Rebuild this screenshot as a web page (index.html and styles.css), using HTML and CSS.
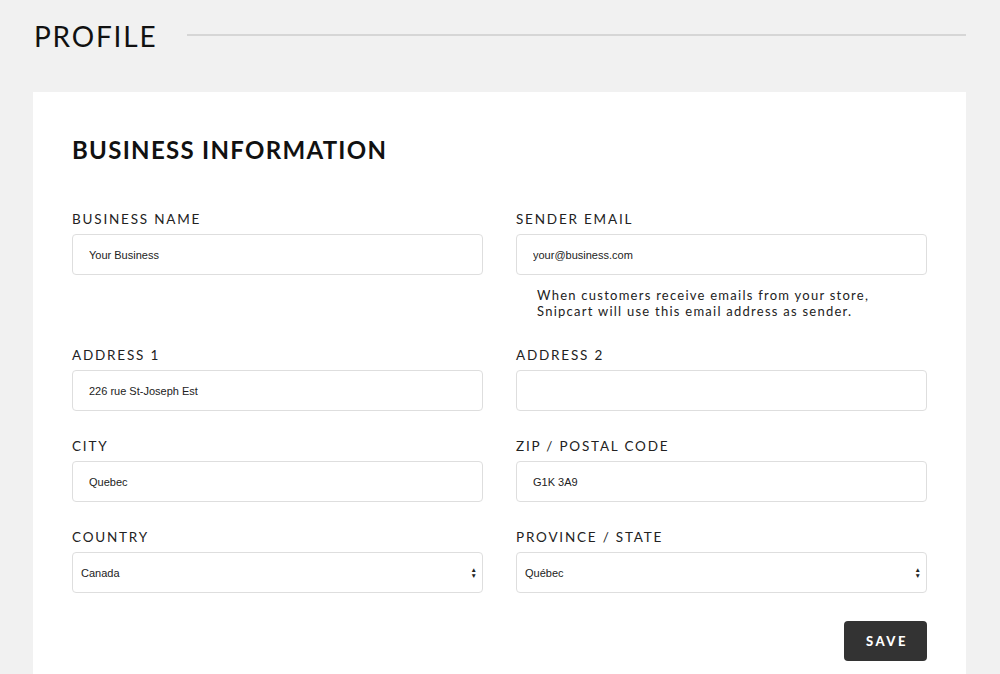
FILE: index.html
```html
<!DOCTYPE html>
<html lang="en">
<head>
    <meta charset="UTF-8">
    <meta name="viewport" content="width=device-width, initial-scale=1.0">
    <title>Profile</title>
    <link rel="stylesheet" href="styles.css">
</head>
<body>
    <div class="page">
        <div class="page-header">
            <h1>Profile</h1>
            <div class="rule"></div>
        </div>
        <div class="card">
            <h2>Business Information</h2>
            <form action="" class="fields">
                <div class="field">
                    <label>Business name</label>
                    <input type="text" value="Your Business">
                </div>
                <div class="field">
                    <label>Sender email</label>
                    <input type="text" value="your@business.com">
                    <p class="help">When customers receive emails from your store,<br>Snipcart will use this email address as sender.</p>
                </div>
                <div class="field">
                    <label>Address 1</label>
                    <input type="text" value="226 rue St-Joseph Est">
                </div>
                <div class="field">
                    <label>Address 2</label>
                    <input type="text" value="">
                </div>
                <div class="field">
                    <label>City</label>
                    <input type="text" value="Quebec">
                </div>
                <div class="field">
                    <label>Zip / Postal code</label>
                    <input type="text" value="G1K 3A9">
                </div>
                <div class="field">
                    <label>Country</label>
                    <div class="select">
                        <span>Canada</span>
                        <span class="arrows">&#9650;<br>&#9660;</span>
                    </div>
                </div>
                <div class="field">
                    <label>Province / State</label>
                    <div class="select">
                        <span>Québec</span>
                        <span class="arrows">&#9650;<br>&#9660;</span>
                    </div>
                </div>
                <div class="actions">
                    <button type="button">Save</button>
                </div>
            </form>
        </div>
    </div>
</body>
</html>
```

FILE: styles.css
```css
* {
    box-sizing: border-box;
    margin: 0;
    padding: 0;
}
body {
    background-color: #f1f1f1;
    font-family: Lato, "Noto Sans", sans-serif;
    color: #111;
    overflow: hidden;
}
.page {
    padding: 0 34px 0 33px;
}
.page-header {
    display: flex;
    align-items: center;
    gap: 30px;
    height: 70px;
    padding-left: 1px;
}
.page-header h1 {
    font-size: 28px;
    font-weight: 400;
    letter-spacing: 1.8px;
    text-transform: uppercase;
    line-height: 36px;
    padding-top: 2px;
    color: #111;
}
.rule {
    flex: 1;
    height: 2px;
    background-color: #d6d6d6;
}
.card {
    margin-top: 22px;
    background-color: white;
    padding: 40px 39px 40px 39px;
    min-height: 700px;
}
.card h2 {
    font-size: 24px;
    font-weight: 700;
    letter-spacing: 1.3px;
    text-transform: uppercase;
    line-height: 36px;
    margin-bottom: 43px;
}
.fields {
    display: grid;
    grid-template-columns: 1fr 1fr;
    column-gap: 33px;
    row-gap: 27px;
}
.field label {
    display: block;
    font-size: 13.5px;
    letter-spacing: 1.8px;
    text-transform: uppercase;
    line-height: 16px;
    margin-bottom: 7px;
    color: #222;
}
.field input,
.select {
    width: 100%;
    height: 41px;
    border: 1px solid #dedede;
    border-radius: 4px;
    font-family: "Liberation Sans", Arial, sans-serif;
    font-size: 11px;
    color: #222;
    padding-left: 16px;
    background-color: white;
}
.select {
    display: flex;
    align-items: center;
    justify-content: space-between;
    padding: 0 5px 0 8px;
}
.arrows {
    font-size: 6.5px;
    line-height: 6px;
    color: #222;
}
.help {
    margin-top: 12px;
    margin-bottom: 1px;
    padding-left: 21px;
    font-size: 13px;
    line-height: 16px;
    letter-spacing: 1.25px;
    color: #222;
}
.actions {
    grid-column: 2;
    display: flex;
    justify-content: flex-end;
    margin-top: 1px;
}
.actions button {
    width: 83px;
    height: 40px;
    border: none;
    border-radius: 4px;
    background-color: #333;
    color: white;
    font-family: Lato, sans-serif;
    font-size: 13px;
    font-weight: 900;
    letter-spacing: 2.5px;
    text-transform: uppercase;
    padding-left: 3px;
}
```
